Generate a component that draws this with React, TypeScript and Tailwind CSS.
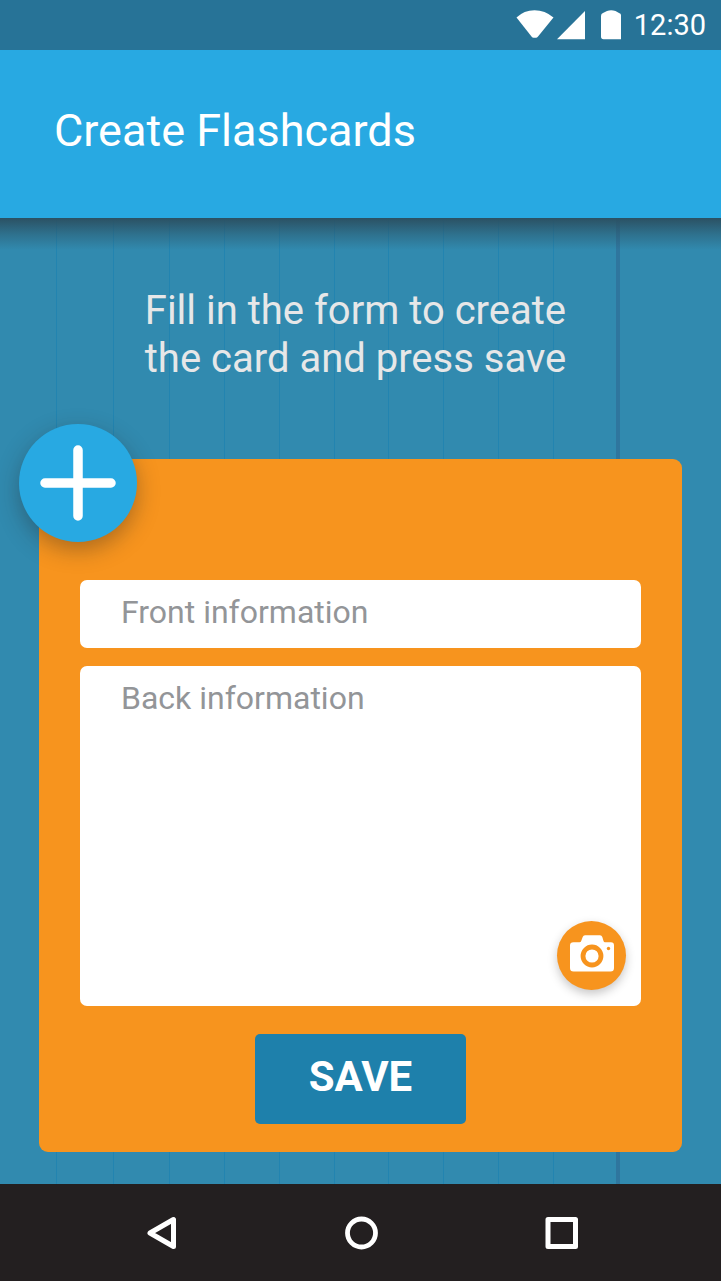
const RULES = [56, 113, 169, 224, 279, 334, 388, 443, 498, 553];

function PaperLines() {
  return (
    <svg className="absolute inset-0 h-full w-full" aria-hidden="true">
      {RULES.map((x) => (
        <rect key={x} x={x} y="0" width="1" height="100%" fill="#1f82b0" opacity="0.8" />
      ))}
      <rect x="616" y="0" width="4" height="100%" fill="#2f769e" />
    </svg>
  );
}

function StatusBar() {
  return (
    <div className="flex h-[50px] items-center justify-end bg-[#277397] pr-[15px] text-white">
      <svg width="106" height="30" viewBox="0 0 106 30" fill="currentColor" aria-hidden="true">
        <path d="M0.500 7.500Q8 0.200 18.500 0.200Q29 0.200 37.500 7.500L22 26.500Q21 27.700 20 27.700H17.500Q16.500 27.700 15.500 26.500Z" />
        <path d="M69 1V29.300H41Z" />
        <path d="M85 6Q85 3.500 87 3L91 1Q95 -0.700 99.500 1L103 3Q105 3.500 105 5V29.300H87.500Q85 29.300 85 26.500Z" />
      </svg>
      <time className="ml-3 text-[29px] leading-[50px]">12:30</time>
    </div>
  );
}

function NavBar() {
  return (
    <nav className="flex h-[97px] shrink-0 items-center justify-center gap-[156px] bg-[#231f20] text-white">
      <button type="button" aria-label="Back" className="flex w-11 justify-center">
        <svg width="36" height="36" viewBox="0 0 36 36" fill="none" stroke="currentColor" strokeWidth="5" strokeLinejoin="round" aria-hidden="true">
          <path d="M7 18 30.500 4.500V31.500Z" />
        </svg>
      </button>
      <button type="button" aria-label="Home" className="flex w-11 justify-center">
        <svg width="36" height="36" viewBox="0 0 36 36" fill="none" stroke="currentColor" strokeWidth="4.800" aria-hidden="true">
          <circle cx="18.500" cy="18" r="14" />
        </svg>
      </button>
      <button type="button" aria-label="Recent apps" className="flex w-11 justify-center">
        <svg width="36" height="36" viewBox="0 0 36 36" fill="none" stroke="currentColor" strokeWidth="5" strokeLinejoin="round" aria-hidden="true">
          <path d="M5 4.500H32.500V31.500H5Z" />
        </svg>
      </button>
    </nav>
  );
}

export default function App() {
  return (
    <div className="flex min-h-screen flex-col bg-[#318aaf] font-[Roboto,sans-serif]">
      <StatusBar />
      <header className="flex h-[168px] items-center bg-[#28a9e2] px-[54px] pb-1.5">
        <h1 className="text-[45px] leading-[56px] text-white">Create Flashcards</h1>
      </header>

      <main className="relative flex flex-1 flex-col px-[39px] pt-[69px] pb-8">
        <PaperLines />
        <div className="absolute inset-x-0 top-0 h-8 bg-linear-to-b from-[#2b5163] via-[#2b5163]/45 to-transparent" />

        <div className="relative flex justify-center pr-2.5">
          <p className="text-[40px] leading-[48px] text-[#e6e7e8]">
            Fill in the form to create
            <br />
            the card and press save
          </p>
        </div>

        <form
          className="relative mt-[76px] flex flex-1 flex-col rounded-[9px] bg-[#f7941e] px-[41px] pt-[121px] pb-7"
          onSubmit={(event) => event.preventDefault()}
        >
          <button
            type="button"
            aria-label="Add card"
            className="absolute -top-[35px] -left-5 flex size-[118px] items-center justify-center rounded-full bg-[#28a9e2] shadow-[0_8px_22px_rgba(35,31,32,0.35)]"
          >
            <svg width="76" height="76" viewBox="0 0 76 76" stroke="#fff" strokeWidth="9.500" strokeLinecap="round" aria-hidden="true">
              <path d="M38 5V71M5 38H71" />
            </svg>
          </button>

          <input
            type="text"
            aria-label="Front information"
            placeholder="Front information"
            className="h-[68px] w-full rounded-[7px] bg-white px-[41px] pb-1 text-[32px] text-[#414042] placeholder:text-[#939598]"
          />
          <div className="relative mt-[18px] flex min-h-[340px] flex-1">
            <textarea
              aria-label="Back information"
              placeholder="Back information"
              className="w-full resize-none rounded-[7px] bg-white px-[41px] py-3 text-[32px] leading-10 text-[#414042] placeholder:text-[#939598]"
            />
            <button
              type="button"
              aria-label="Add photo"
              className="absolute right-[15px] bottom-4 flex size-[69px] items-center justify-center rounded-full bg-[#f7941e] shadow-[0_4px_10px_rgba(35,31,32,0.25)]"
            >
              <svg width="46" height="46" viewBox="0 0 46 46" aria-hidden="true">
                <path
                  d="M12 8.500 13.700 4Q14.300 2.300 16 2.300H31Q32.700 2.300 33.300 4L34.500 8Q34.900 9.200 36 9.200H42Q45 9.200 45 12.500V35Q45 38.500 41.500 38.500H4.500Q1 38.500 1 35V12.500Q1 9.200 4.500 9.200H10.500Q11.700 9.200 12 8.500Z"
                  fill="#fff"
                />
                <circle cx="23" cy="23" r="9" fill="#fff" stroke="#f7941e" strokeWidth="4.800" />
                <circle cx="39.500" cy="15.500" r="1.700" fill="#f7941e" />
              </svg>
            </button>
          </div>
          <button
            type="submit"
            className="mt-7 h-[90px] w-[211px] self-center rounded-[5px] bg-[#1e80ab] pb-1.5 text-[42px] font-bold text-white"
          >
            SAVE
          </button>
        </form>
      </main>

      <NavBar />
    </div>
  );
}
